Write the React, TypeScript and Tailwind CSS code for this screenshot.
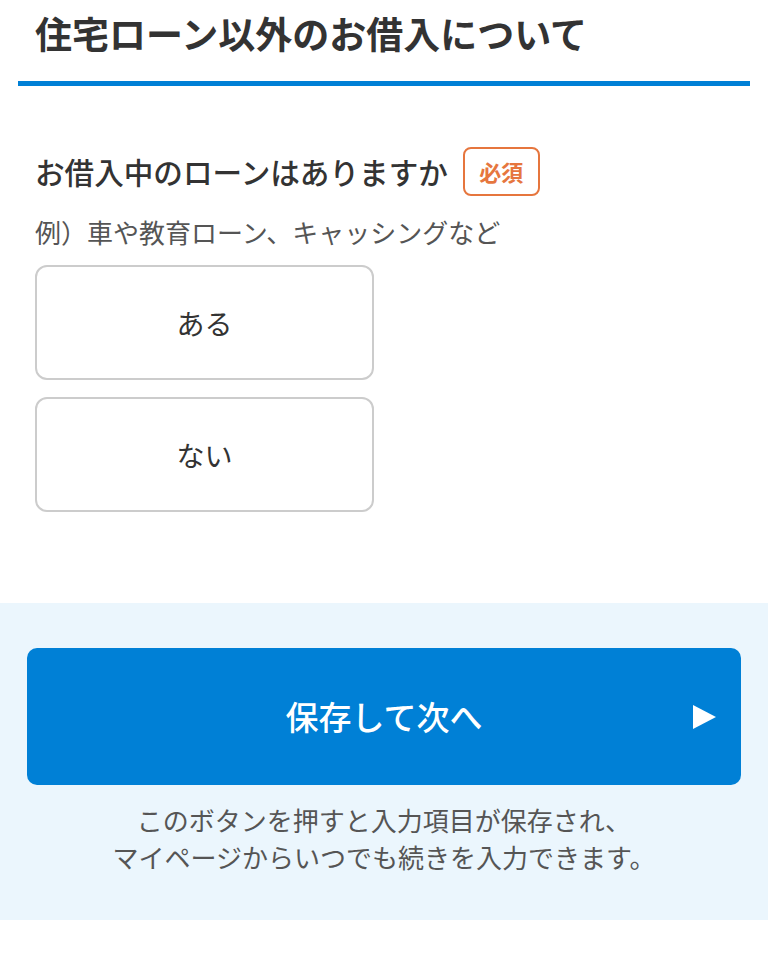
import React from 'react';

const jp = { fontFamily: '"Noto Sans CJK JP", "Noto Sans", sans-serif' };

const OptionButton = ({ label }: { label: string }) => (
  <button
    type="button"
    className="w-[339px] h-[115px] rounded-[12px] border-2 border-[#cccccc] bg-white text-[28px] text-[#333333] flex items-center justify-center"
  >
    {label}
  </button>
);

export default function App() {
  return (
    <div className="w-[768px] min-h-[975px] bg-white" style={jp}>
      <h1 className="pt-[11px] px-[35px] text-[37px] leading-[44px] font-bold text-[#333333]">
        住宅ローン以外のお借入について
      </h1>
      <div className="mt-[26px] mx-[18px] h-[5px] bg-[#0080d6]" />

      <section className="px-[35px] pt-[61px]">
        <div className="flex items-center gap-[15px]">
          <h2 className="text-[29.6px] leading-[40px] font-medium text-[#333333]">
            お借入中のローンはありますか
          </h2>
          <span className="w-[77px] h-[49px] rounded-[8px] border-2 border-[#e6763e] text-[#e6763e] text-[22px] font-bold flex items-center justify-center">
            必須
          </span>
        </div>
        <p className="mt-[18px] text-[26px] leading-[36px] text-[#555555]">
          例）車や教育ローン、キャッシングなど
        </p>
        <div className="mt-[15px] flex flex-col gap-[17px]">
          <OptionButton label="ある" />
          <OptionButton label="ない" />
        </div>
      </section>

      <section className="mt-[91px] bg-[#ebf6fd] px-[27px] pt-[45px] pb-[45px]">
        <button
          type="button"
          className="relative w-full h-[137px] rounded-[10px] bg-[#0080d6] text-white text-[33px] font-medium flex items-center justify-center"
        >
          保存して次へ
          <svg className="absolute right-[25px] top-1/2 -translate-y-1/2" width="23" height="24" viewBox="0 0 23 24">
            <path d="M0 0 L23 12 L0 24 Z" fill="#ffffff" />
          </svg>
        </button>
        <p className="mt-[16px] text-center text-[26px] leading-[37px] text-[#555555]">
          このボタンを押すと入力項目が保存され、
          <br />
          マイページからいつでも続きを入力できます。
        </p>
      </section>
    </div>
  );
}
